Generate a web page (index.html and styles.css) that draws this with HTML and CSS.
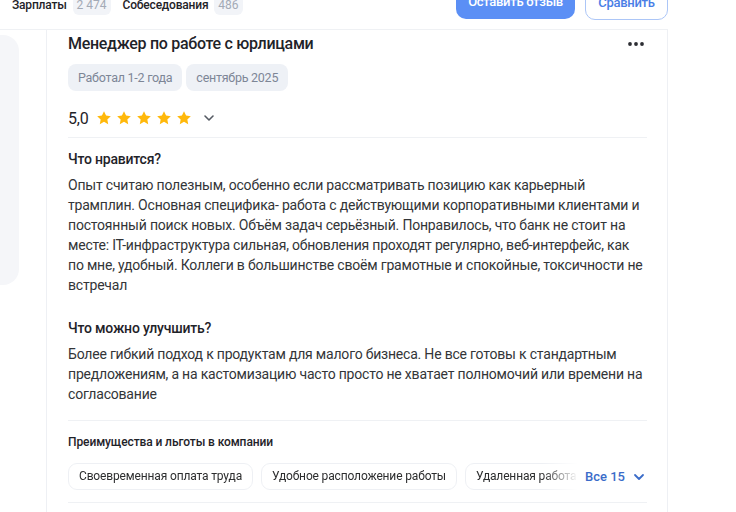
FILE: index.html
```html
<!DOCTYPE html>
<html lang="ru">
<head>
<meta charset="utf-8">
<link rel="stylesheet" href="styles.css">
</head>
<body>
<header class="topbar">
  <nav class="tabs">
    <span class="tab">Зарплаты</span><span class="count">2 474</span>
    <span class="tab tab-gap">Собеседования</span><span class="count">486</span>
  </nav>
  <div class="actions">
    <button class="btn btn-primary">Оставить отзыв</button>
    <button class="btn btn-outline">Сравнить</button>
  </div>
</header>
<div class="layout">
  <aside class="side"></aside>
  <article class="card">
    <div class="title-row">
      <h1 class="title">Менеджер по работе с юрлицами</h1>
      <svg class="dots" width="18" height="6" viewBox="0 0 18 6"><circle cx="3" cy="3" r="1.9"/><circle cx="9" cy="3" r="1.9"/><circle cx="15" cy="3" r="1.9"/></svg>
    </div>
    <div class="tags">
      <span class="tag">Работал 1-2 года</span>
      <span class="tag">сентябрь 2025</span>
    </div>
    <div class="rating">
      <span class="score">5,0</span>
      <span class="stars">
        <svg class="star" viewBox="0 0 24 24"><path d="M12 1.8l3.1 6.5 7.1.9-5.2 4.9 1.3 7.1L12 17.8l-6.3 3.4 1.3-7.1-5.2-4.9 7.1-.9z"/></svg>
        <svg class="star" viewBox="0 0 24 24"><path d="M12 1.8l3.1 6.5 7.1.9-5.2 4.9 1.3 7.1L12 17.8l-6.3 3.4 1.3-7.1-5.2-4.9 7.1-.9z"/></svg>
        <svg class="star" viewBox="0 0 24 24"><path d="M12 1.8l3.1 6.5 7.1.9-5.2 4.9 1.3 7.1L12 17.8l-6.3 3.4 1.3-7.1-5.2-4.9 7.1-.9z"/></svg>
        <svg class="star" viewBox="0 0 24 24"><path d="M12 1.8l3.1 6.5 7.1.9-5.2 4.9 1.3 7.1L12 17.8l-6.3 3.4 1.3-7.1-5.2-4.9 7.1-.9z"/></svg>
        <svg class="star" viewBox="0 0 24 24"><path d="M12 1.8l3.1 6.5 7.1.9-5.2 4.9 1.3 7.1L12 17.8l-6.3 3.4 1.3-7.1-5.2-4.9 7.1-.9z"/></svg>
      </span>
      <svg class="chev" width="12" height="8" viewBox="0 0 12 8"><path d="M2 2l4 4 4-4"/></svg>
    </div>
    <section class="block">
      <h2 class="block-title">Что нравится?</h2>
      <p class="text">Опыт считаю полезным, особенно если рассматривать позицию как карьерный трамплин. Основная специфика- работа с действующими корпоративными клиентами и постоянный поиск новых. Объём задач серьёзный. Понравилось, что банк не стоит на месте: IT-инфраструктура сильная, обновления проходят регулярно, веб-интерфейс, как по мне, удобный. Коллеги в большинстве своём грамотные и спокойные, токсичности не встречал</p>
      <h2 class="block-title second">Что можно улучшить?</h2>
      <p class="text">Более гибкий подход к продуктам для малого бизнеса. Не все готовы к стандартным предложениям, а на кастомизацию часто просто не хватает полномочий или времени на согласование</p>
    </section>
    <section class="benefits">
      <h3 class="benefits-title">Преимущества и льготы в компании</h3>
      <div class="chips-row">
        <div class="chips">
          <span class="chip">Своевременная оплата труда</span>
          <span class="chip">Удобное расположение работы</span>
          <span class="chip">Удаленная работа</span>
        </div>
        <span class="more">Все 15
          <svg class="more-chev" width="12" height="8" viewBox="0 0 12 8"><path d="M2 2l4 4 4-4"/></svg>
        </span>
      </div>
    </section>
  </article>
</div>
</body>
</html>
```

FILE: styles.css
```css
* { box-sizing: border-box; }
html, body { margin: 0; padding: 0; background: #fff; }
body {
  font-family: Roboto, "Noto Sans", sans-serif;
  color: #2c2d2e;
  overflow: hidden;
}
.topbar {
  display: flex;
  justify-content: space-between;
  width: 668px;
  height: 45px;
  margin-top: -16px;
}
.tabs {
  display: flex;
  align-items: center;
  height: 40px;
  padding-left: 12px;
  padding-top: 1px;
}
.tab { font-size: 12px; font-weight: 500; color: #1f2329; letter-spacing: -0.2px; }
.tab-gap { margin-left: 12px; }
.count {
  margin-left: 6px;
  padding: 3px 4px;
  border-radius: 6px;
  background: #f2f4f8;
  color: #a3aab6;
  font-size: 12px;
  line-height: 14px;
}
.actions { display: flex; gap: 10px; align-items: flex-start; }
.btn {
  height: 36px;
  border-radius: 10px;
  font-family: Roboto, sans-serif;
  font-size: 13px;
  font-weight: 500;
  letter-spacing: -0.3px;
  padding: 0;
  white-space: nowrap;
}
.btn-primary {
  width: 119px;
  height: 35px;
  border: none;
  background: #5b8ff5;
  color: #fff;
}
.btn-outline {
  width: 83px;
  border: 1px solid #acc6f7;
  background: #fff;
  color: #4a7ee6;
}
.layout {
  display: flex;
  width: 668px;
  border-top: 1px solid #eff1f4;
  height: 600px;
}
.side {
  width: 19px;
  height: 250px;
  margin-top: 5px;
  background: #f5f6f9;
  border-radius: 0 16px 16px 0;
  flex: none;
}
.card {
  margin-left: 27px;
  flex: 1;
  border-left: 1px solid #eef0f4;
  border-right: 1px solid #eef0f4;
  padding: 2px 20px 0 21px;
}
.title-row { display: flex; justify-content: space-between; align-items: center; height: 24px; }
.title { margin: 0; font-size: 16px; font-weight: 500; line-height: 24px; color: #1f2329; letter-spacing: -0.3px; }
.dots { fill: #2c2d33; margin-right: 2px; }
.tags { display: flex; gap: 4px; margin-top: 8px; }
.tag {
  height: 27px;
  padding: 0 10px;
  border-radius: 8px;
  background: #eef1f6;
  color: #7d8696;
  font-size: 12.5px;
  letter-spacing: -0.25px;
  line-height: 27px;
}
.rating {
  display: flex;
  align-items: center;
  height: 47px;
  padding-top: 8px;
  border-bottom: 1px solid #eff1f4;
}
.score { font-size: 16px; color: #1f2329; margin-right: 7px; letter-spacing: -0.2px; }
.stars { display: flex; gap: 4px; }
.star { width: 16px; height: 16px; fill: #ffb80a; }
.chev { margin-left: 11px; fill: none; stroke: #555a63; stroke-width: 1.6; stroke-linecap: round; stroke-linejoin: round; }
.block { border-bottom: 1px solid #eff1f4; padding: 13px 0 16px; }
.block-title { margin: 0; font-size: 14px; font-weight: 500; line-height: 16px; color: #1f2329; letter-spacing: -0.2px; }
.block-title.second { margin-top: 25px; }
.text { margin: 8px 0 0; font-size: 14px; line-height: 20px; color: #333538; letter-spacing: -0.2px; }
.benefits { padding-top: 13px; border-bottom: 1px solid #eff1f4; padding-bottom: 12px; }
.benefits-title { margin: 0; font-size: 12px; font-weight: 500; line-height: 16px; color: #1f2329; letter-spacing: -0.1px; }
.chips-row { display: flex; align-items: center; margin-top: 13px; }
.chips {
  display: flex;
  gap: 8px;
  width: 510px;
  overflow: hidden;
  -webkit-mask-image: linear-gradient(to right, #000 calc(100% - 36px), transparent);
  mask-image: linear-gradient(to right, #000 calc(100% - 36px), transparent);
}
.chip {
  flex: none;
  height: 27px;
  padding: 0 10px;
  border: 1px solid #eef0f4;
  border-radius: 9px;
  background: #fff;
  color: #2c2d2e;
  font-size: 12px;
  letter-spacing: -0.15px;
  line-height: 25px;
}
.more {
  display: flex;
  align-items: center;
  margin-left: 7px;
  color: #3b6cc9;
  font-size: 13px;
  font-weight: 500;
}
.more-chev { margin-left: 8px; fill: none; stroke: #3b6cc9; stroke-width: 1.8; stroke-linecap: round; stroke-linejoin: round; }
```
